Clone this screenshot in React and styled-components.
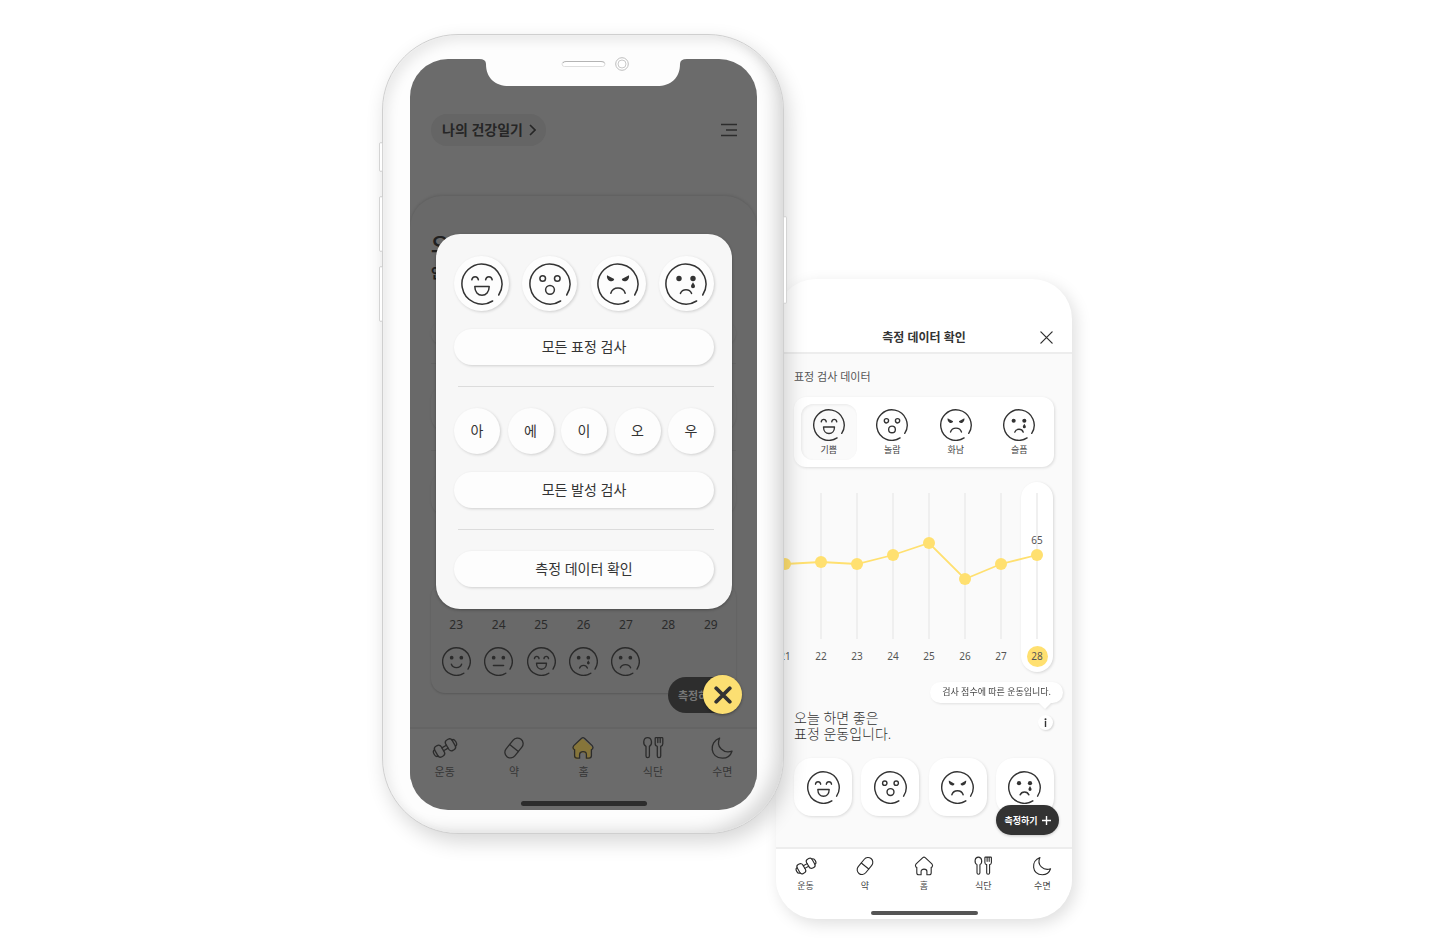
import React from "react";
import styled, { createGlobalStyle, css } from "styled-components";

const Global = createGlobalStyle`
  *, *::before, *::after { box-sizing: border-box; }
  body {
    margin: 0;
    background: #fff;
    color: #333;
    font-family: "Noto Sans", "Noto Sans CJK KR", sans-serif;
  }
  button { font-family: inherit; color: inherit; border: 0; padding: 0; cursor: pointer; }
  a { color: inherit; text-decoration: none; }
  h1, h2, p, ul, ol { margin: 0; padding: 0; list-style: none; }
  svg { display: block; flex: none; }
`;

const Stage = styled.main`
  display: flex;
  justify-content: center;
  align-items: flex-start;
  min-height: 100vh;
  padding: 34px 0 28px 4px;
  overflow: hidden;
`;

/* ---------- device frame ---------- */

const Device = styled.section`
  position: relative;
  z-index: 2;
  flex: 0 0 402px;
  padding: 25px 27px 24px 28px;
  border: 1px solid #cfcfcf;
  border-radius: 76px;
  background: #fdfdfd;
  box-shadow:
    inset -14px -8px 16px -6px rgba(0, 0, 0, 0.14),
    inset 5px 6px 12px rgba(0, 0, 0, 0.08),
    inset 0 0 0 1px #fff,
    4px 8px 20px rgba(0, 0, 0, 0.16);
`;

const SideKey = styled.span`
  position: absolute;
  top: ${(p) => p.$top}px;
  ${(p) => p.$side}: -4px;
  width: 4px;
  height: ${(p) => p.$length}px;
  border: 1px solid #d4d4d4;
  border-radius: 2px;
  background: #fff;
`;

const NotchArt = styled.svg`
  position: absolute;
  top: 0;
  left: 50%;
  margin-left: -105px;
  z-index: 3;
`;

const Screen = styled.div`
  position: relative;
  display: flex;
  flex-direction: column;
  min-height: 751px;
  margin: -1px;
  border-radius: 38px;
  background: #6b6b6b;
  overflow: hidden;
`;

const DiaryHeader = styled.header`
  display: flex;
  justify-content: space-between;
  align-items: center;
  padding: 55px 20px 0 21px;
`;

const DiaryButton = styled.button`
  display: flex;
  align-items: center;
  gap: 6px;
  height: 32px;
  padding: 0 10px 0 11px;
  border-radius: 16px;
  background: #656565;
  font-size: 14px;
  line-height: 20px;
  font-weight: 700;
  color: #262626;
`;

const PlainIconButton = styled.button`
  display: block;
  background: none;
`;

const Sheet = styled.div`
  flex: 1;
  display: flex;
  flex-direction: column;
  margin-top: 50px;
  padding: 36px 21px 34px;
  border-radius: 32px 32px 0 0;
  background: #696969;
  box-shadow: 0 -1px 3px rgba(0, 0, 0, 0.12);
`;

const SheetTitle = styled.h1`
  font-size: 20px;
  line-height: 27px;
  font-weight: 700;
  color: #202020;
`;

const SheetLead = styled.p`
  font-size: 14px;
  line-height: 27px;
  font-weight: 700;
  color: #202020;
`;

const Ghost = styled.div`
  height: ${(p) => p.$h}px;
  margin-top: ${(p) => p.$gap}px;
  border-radius: 16px;
  box-shadow: 0 1px 2px rgba(0, 0, 0, 0.1);
`;

const GhostRule = styled.hr`
  width: 100%;
  height: 1px;
  margin: 18px 0 0;
  border: 0;
  background: #636363;
`;

const WeekCard = styled.div`
  display: flex;
  flex-direction: column;
  justify-content: flex-end;
  gap: 14px;
  height: 110px;
  margin-top: auto;
  padding: 0 4px 17px;
  border-radius: 14px;
  background: #696969;
  box-shadow: 0 1px 2px rgba(0, 0, 0, 0.16);
`;

const WeekRow = styled.ol`
  display: grid;
  grid-template-columns: repeat(7, 1fr);
  justify-items: center;
  font-size: 12px;
  line-height: 16px;
  color: #2b2b2b;
`;

const tabSizes = {
  large: css`
    padding-top: 5px;
    font-size: 11px;
    line-height: 16px;
    gap: 2px;
  `,
  small: css`
    padding-top: 5px;
    font-size: 9px;
    line-height: 12px;
    gap: 2px;
  `,
};

const TabBar = styled.nav`
  display: grid;
  grid-template-columns: repeat(5, 1fr);
  border-top: 2px solid ${(p) => (p.$size === "large" ? "#646464" : "#ededed")};
  background: ${(p) => (p.$size === "large" ? "#6b6b6b" : "#fff")};
  color: ${(p) => (p.$size === "large" ? "#363636" : "#444")};
`;

const Tab = styled.a`
  display: flex;
  flex-direction: column;
  align-items: center;
  ${(p) => tabSizes[p.$size]}
`;

const HomeBar = styled.div`
  width: ${(p) => p.$w}px;
  height: ${(p) => p.$h}px;
  margin: ${(p) => p.$top}px auto ${(p) => p.$bottom}px;
  border-radius: 3px;
  background: ${(p) => p.$color};
`;

const MeasureGroup = styled.div`
  position: absolute;
  right: 15px;
  bottom: 96px;
  display: flex;
  align-items: center;
`;

const DimMeasure = styled.button`
  width: 55px;
  height: 36px;
  margin-right: -20px;
  padding-left: 10px;
  border-radius: 18px 0 0 18px;
  background: #2d2d2d;
  color: #777;
  font-size: 11px;
  font-weight: 700;
  text-align: left;
  white-space: nowrap;
  overflow: hidden;
`;

const CloseFab = styled.button`
  position: relative;
  display: grid;
  place-items: center;
  width: 39px;
  height: 39px;
  border-radius: 50%;
  background: #fcdf72;
  box-shadow: 0 1px 3px rgba(0, 0, 0, 0.4);
`;

/* ---------- test picker dialog ---------- */

const Dialog = styled.div`
  position: absolute;
  top: 175px;
  left: 26px;
  right: 25px;
  padding: 22px 18px;
  border-radius: 24px;
  background: #f7f7f7;
  box-shadow: 0 1px 3px rgba(0, 0, 0, 0.3);
`;

const DialogRow = styled.div`
  display: flex;
  justify-content: space-between;
  margin-bottom: 18px;
`;

const RoundButton = styled.button`
  display: grid;
  place-items: center;
  width: ${(p) => p.$d}px;
  height: ${(p) => p.$d}px;
  border-radius: 50%;
  background: #fdfdfd;
  box-shadow: 1px 1px 3px rgba(0, 0, 0, 0.16);
  font-size: 14px;
  line-height: 20px;
`;

const WideButton = styled.button`
  display: block;
  width: 100%;
  height: 36px;
  border-radius: 18px;
  background: #fdfdfd;
  box-shadow: 1px 1px 3px rgba(0, 0, 0, 0.16);
  font-size: 14px;
  line-height: 20px;
`;

const DialogRule = styled.hr`
  height: 1px;
  margin: 21px 0 21px 4px;
  border: 0;
  background: #dcdcdc;
`;

/* ---------- data card ---------- */

const Panel = styled.section`
  position: relative;
  display: flex;
  flex-direction: column;
  flex: 0 0 296px;
  min-height: 640px;
  margin: 245px 0 0 -8px;
  border-radius: 40px;
  background: #fff;
  box-shadow: 4px 5px 16px rgba(0, 0, 0, 0.13);
  overflow: hidden;
`;

const PanelHeader = styled.header`
  display: grid;
  grid-template-columns: 20px 1fr 20px;
  align-items: center;
  height: 75px;
  padding: 44px 16px 0;
  border-bottom: 2px solid #ededed;
`;

const PanelTitle = styled.h2`
  grid-column: 2;
  font-size: 12px;
  line-height: 16px;
  font-weight: 700;
  text-align: center;
`;

const CloseButton = styled(PlainIconButton)`
  justify-self: end;
  padding: 2px;
`;

const PanelBody = styled.div`
  flex: 1;
  padding: 15px 18px 0;
  background: #fafafa;
`;

const SectionLabel = styled.p`
  font-size: 11px;
  line-height: 16px;
  color: #555;
`;

const FacePicker = styled.div`
  display: grid;
  grid-template-columns: repeat(4, 1fr);
  margin-top: 12px;
  padding: 7px 3px;
  border-radius: 12px;
  background: #fff;
  box-shadow: 1px 1px 3px rgba(0, 0, 0, 0.12);
`;

const FaceOption = styled.button`
  justify-self: center;
  display: flex;
  flex-direction: column;
  align-items: center;
  gap: 2px;
  width: 56px;
  height: 56px;
  padding-top: 5px;
  border-radius: 12px;
  background: ${(p) => (p.$active ? "#fafafa" : "none")};
  box-shadow: ${(p) => (p.$active ? "inset 1px 1px 3px rgba(0,0,0,0.07)" : "none")};
  font-size: 9px;
  line-height: 13px;
  color: #444;

  svg { color: #333; }
`;

const Chart = styled.div`
  position: relative;
  display: flex;
  margin: 15px 0 0 -27px;
`;

const ChartDays = styled.ol`
  display: grid;
  grid-template-columns: repeat(8, 36px);
`;

const ChartDay = styled.li`
  display: flex;
  justify-content: center;
  align-items: flex-end;
  height: 190px;
  margin: 0 2px;
  padding-bottom: 5px;
  font-size: 10px;
  line-height: 21px;
  color: #555;
  border-radius: 16px;
  background: ${(p) => (p.$active ? "#fff" : "none")};
  box-shadow: ${(p) => (p.$active ? "1px 1px 3px rgba(0,0,0,0.14)" : "none")};
`;

const DayBadge = styled.span`
  width: 21px;
  border-radius: 50%;
  text-align: center;
  background: ${(p) => (p.$active ? "#ffe070" : "none")};
`;

const ChartArt = styled.svg`
  position: absolute;
  top: 0;
  left: 0;
`;

const Advice = styled.div`
  position: relative;
  display: flex;
  justify-content: space-between;
  padding: 38px 1px 0 0;
`;

const AdviceTitle = styled.h2`
  font-size: 14px;
  line-height: 16px;
  font-weight: 300;
  color: #333;
`;

const Tooltip = styled.p`
  position: absolute;
  top: 10px;
  right: -9px;
  height: 21px;
  padding: 0 12px;
  border-radius: 11px;
  background: #fff;
  font-size: 9px;
  line-height: 20px;
  white-space: nowrap;
  color: #444;
  filter: drop-shadow(1px 1px 1px rgba(0, 0, 0, 0.1));

  &::after {
    content: "";
    position: absolute;
    top: 20px;
    right: 11px;
    border: 7px solid transparent;
    border-top-color: #fff;
    border-bottom: 0;
  }
`;

const InfoButton = styled.button`
  display: grid;
  place-items: center;
  width: 15px;
  height: 15px;
  margin-top: 5px;
  border-radius: 50%;
  background: #fff;
  box-shadow: 1px 1px 2px rgba(0, 0, 0, 0.14);
`;

const TileRow = styled.div`
  display: flex;
  justify-content: space-between;
  margin-top: 16px;
`;

const Tile = styled.button`
  display: grid;
  place-items: center;
  width: 58px;
  height: 58px;
  border-radius: 18px;
  background: #fff;
  box-shadow: 1px 1px 3px rgba(0, 0, 0, 0.12);
`;

const MeasureButton = styled.button`
  position: absolute;
  right: 13px;
  bottom: 84px;
  display: flex;
  align-items: center;
  justify-content: center;
  gap: 4px;
  width: 63px;
  height: 30px;
  border-radius: 15px;
  background: #333;
  color: #fff;
  font-size: 9px;
  font-weight: 700;
  white-space: nowrap;
  box-shadow: 0 1px 3px rgba(0, 0, 0, 0.2);
`;

/* ---------- drawings ---------- */

const dotEyes = (
  <g fill="currentColor" stroke="none">
    <circle cx="-7" cy="-5.5" r="2.7" />
    <circle cx="7" cy="-5.5" r="2.7" />
  </g>
);

const faceParts = {
  joy: (
    <>
      <path d="M-10.2-4.2C-9.6-8.4-4.2-8.4-3.6-4.2M3.6-4.2C4.2-8.4 9.6-8.4 10.2-4.2" />
      <path d="M-7.2 2.6H7.2C7.2 8 4 11.2 0 11.2S-7.2 8-7.2 2.6Z" />
    </>
  ),
  surprise: (
    <>
      <circle cx="-7.3" cy="-5.5" r="2.8" />
      <circle cx="7.3" cy="-5.5" r="2.8" />
      <circle cx="0" cy="5.8" r="4.4" />
    </>
  ),
  anger: (
    <>
      <path
        fill="currentColor"
        stroke="none"
        d="M-11-8.8L-3.8-4.9C-4.2-2.6-6.4-2.2-8.4-3.1C-10.6-4.1-11.4-6.5-11-8.8ZM11-8.8L3.8-4.9C4.2-2.6 6.4-2.2 8.4-3.1C10.6-4.1 11.4-6.5 11-8.8Z"
      />
      <path d="M-7.2 9.2C-5 2.4 5 2.4 7.2 9.2" />
    </>
  ),
  sorrow: (
    <>
      {dotEyes}
      <path fill="currentColor" stroke="none" d="M7-1.8C7.6-.2 9 .8 9 2.3A2 2 0 0 1 5 2.3C5 .8 6.4-.2 7-1.8Z" />
      <path d="M-5.6 9.4C-3.6 4.4 3.6 4.4 5.6 9.4" />
    </>
  ),
  smile: (
    <>
      {dotEyes}
      <path d="M-7.4 4C-5 10.4 5 10.4 7.4 4" />
    </>
  ),
  calm: (
    <>
      {dotEyes}
      <path d="M-7.4 5.8H7.4" />
    </>
  ),
  sad: (
    <>
      {dotEyes}
      <path d="M-7.4 9.2C-5 3 5 3 7.4 9.2" />
    </>
  ),
};

function Face({ kind, size, line = 1.4 }) {
  return (
    <svg
      width={size}
      height={size}
      viewBox="-21 -21 42 42"
      fill="none"
      stroke="currentColor"
      strokeWidth={line}
      strokeLinecap="round"
      strokeLinejoin="round"
      aria-hidden="true"
    >
      <path d="M16.7 11A20 20 0 1 0 10.6 17" />
      {faceParts[kind]}
    </svg>
  );
}

const tabArt = {
  dumbbell: (
    <g transform="rotate(-30)">
      <rect x="-10" y="-6" width="7.4" height="12" rx="3" />
      <rect x="2.6" y="-6" width="7.4" height="12" rx="3" />
      <path d="M-2.6-1.7H2.6M-2.6 1.7H2.6M-10-3.6C-13.4-3.6-13.4 3.6-10 3.6M10-3.6C13.4-3.6 13.4 3.6 10 3.6" />
    </g>
  ),
  pill: (
    <g transform="rotate(-51)">
      <rect x="-11.2" y="-5.6" width="22.4" height="11.2" rx="5.6" />
      <path d="M0-5.6V5.6" />
    </g>
  ),
  home: (
    <path d="M-1.4-9.8Q0-10.8 1.4-9.8L9.2-2.4Q10.6-.8 9.6.8Q9.200 1.600 8.4 1.600V7.8Q8.4 10.2 6 10.2H3.4V6.400C3.4 2.800-3.4 2.800-3.4 6.400V10.2H-6Q-8.4 10.2-8.4 7.8V1.600Q-9.200 1.600-9.6.8Q-10.6-.8-9.2-2.4Z" />
  ),
  meal: (
    <>
      <path d="M-5.4-10.4C-10-10.4-10.4-3.4-7-1.600V8A1.700 1.700 0 0 0-3.600 8V-1.600C-.4-3.4-.8-10.4-5.4-10.4Z" />
      <path d="M2.200-9.6V-4.2Q2.200-2 4.300-1.600V8A1.700 1.700 0 0 0 7.700 8V-1.600Q9.8-2 9.8-4.2V-9.6Q9.8-10.4 9-10.4H3Q2.200-10.4 2.200-9.6ZM4.800-10.2V-5.4M7.200-10.2V-5.4" />
    </>
  ),
  moon: <path d="M-2.4-9.8C-13.4-6-12 10.2 .4 10.2C5 10.2 8.600 7.600 10 3.2C2 6-6.6-1-2.4-9.8Z" />,
};

function TabIcon({ kind, size, filled }) {
  return (
    <svg
      width={size}
      height={size}
      viewBox="-14 -14 28 28"
      fill="none"
      stroke="#2c2c2c"
      strokeWidth="1.3"
      strokeLinecap="round"
      strokeLinejoin="round"
      aria-hidden="true"
    >
      {filled && (
        <g transform="translate(-0.8 1)" fill="#86753a" stroke="none">
          {tabArt[kind]}
        </g>
      )}
      {tabArt[kind]}
    </svg>
  );
}

function Cross({ size, width, color }) {
  return (
    <svg width={size} height={size} viewBox="0 0 16 16" stroke={color} strokeWidth={width} strokeLinecap="round" aria-hidden="true">
      <path d="M2 2L14 14M14 2L2 14" />
    </svg>
  );
}

function Notch() {
  return (
    <NotchArt width="210" height="54" viewBox="0 0 210 54" aria-hidden="true">
      <path d="M1 22V24Q8 24 8 29C8 43 17 51 31 51H179C193 51 202 43 202 29Q202 24 209 24V22Z" fill="#fdfdfd" />
      <rect x="84" y="26.500" width="43" height="5" rx="2.500" fill="#fff" stroke="#dedede" />
      <path d="M85 28Q86 26.500 88 26.500H123Q125.500 26.500 126.500 28" fill="none" stroke="#b4b4b4" />
      <circle cx="144" cy="29" r="6.300" fill="#fff" stroke="#bdbdbd" />
      <circle cx="144" cy="29" r="4" fill="#fff" stroke="#c9c9c9" />
    </NotchArt>
  );
}

/* ---------- content ---------- */

const tabs = [
  { kind: "dumbbell", label: "운동" },
  { kind: "pill", label: "약" },
  { kind: "home", label: "홈" },
  { kind: "meal", label: "식단" },
  { kind: "moon", label: "수면" },
];

const faces = [
  { kind: "joy", label: "기쁨" },
  { kind: "surprise", label: "놀람" },
  { kind: "anger", label: "화남" },
  { kind: "sorrow", label: "슬픔" },
];

const week = [23, 24, 25, 26, 27, 28, 29];
const weekFaces = ["smile", "calm", "joy", "sorrow", "sad"];
const vowels = ["아", "에", "이", "오", "우"];

const scores = [
  { day: 21, y: 82 },
  { day: 22, y: 80 },
  { day: 23, y: 82 },
  { day: 24, y: 73 },
  { day: 25, y: 61 },
  { day: 26, y: 97 },
  { day: 27, y: 82 },
  { day: 28, y: 73 },
];

const xOf = (i) => i * 36 + 18;

function Tabs({ size, active }) {
  return (
    <TabBar $size={size}>
      {tabs.map((t) => (
        <Tab key={t.kind} href={`#${t.kind}`} $size={size}>
          <TabIcon kind={t.kind} size={size === "large" ? 28 : 24} filled={t.kind === active} />
          {t.label}
        </Tab>
      ))}
    </TabBar>
  );
}

function ScoreChart() {
  const last = scores.length - 1;
  return (
    <Chart>
      <ChartDays>
        {scores.map((s, i) => (
          <ChartDay key={s.day} $active={i === last}>
            <DayBadge $active={i === last}>{s.day}</DayBadge>
          </ChartDay>
        ))}
      </ChartDays>
      <ChartArt width="288" height="160" viewBox="0 0 288 160" role="img" aria-label="표정 검사 점수">
        {scores.slice(1).map((s, i) => (
          <path key={s.day} d={`M${xOf(i + 1)} 11V157`} stroke="#ebebeb" strokeWidth="1.500" />
        ))}
        <polyline
          points={scores.map((s, i) => `${xOf(i)},${s.y}`).join(" ")}
          fill="none"
          stroke="#ffe070"
          strokeWidth="1.800"
        />
        {scores.map((s, i) => (
          <circle key={s.day} cx={xOf(i)} cy={s.y} r="6" fill="#ffe070" />
        ))}
        <text x={xOf(last)} y="62" textAnchor="middle" fontSize="10" fill="#555">
          65
        </text>
      </ChartArt>
    </Chart>
  );
}

function TestDialog() {
  return (
    <Dialog role="dialog" aria-label="검사 선택">
      <DialogRow>
        {faces.map((f) => (
          <RoundButton key={f.kind} $d={55} aria-label={f.label}>
            <Face kind={f.kind} size={42} line={1.5} />
          </RoundButton>
        ))}
      </DialogRow>
      <WideButton>모든 표정 검사</WideButton>
      <DialogRule />
      <DialogRow>
        {vowels.map((v) => (
          <RoundButton key={v} $d={46}>
            {v}
          </RoundButton>
        ))}
      </DialogRow>
      <WideButton>모든 발성 검사</WideButton>
      <DialogRule />
      <WideButton>측정 데이터 확인</WideButton>
    </Dialog>
  );
}

function DiaryPhone() {
  return (
    <Device>
      <SideKey $side="left" $top={107} $length={30} />
      <SideKey $side="left" $top={161} $length={56} />
      <SideKey $side="left" $top={231} $length={56} />
      <SideKey $side="right" $top={181} $length={88} />
      <Notch />
      <Screen>
        <DiaryHeader>
          <DiaryButton>
            나의 건강일기
            <svg width="7" height="12" viewBox="0 0 7 12" fill="none" stroke="#262626" strokeWidth="1.600" aria-hidden="true">
              <path d="M1 1L6 6L1 11" />
            </svg>
          </DiaryButton>
          <PlainIconButton aria-label="메뉴">
            <svg width="16" height="14" viewBox="0 0 16 14" stroke="#2c2c2c" strokeWidth="1.500" aria-hidden="true">
              <path d="M0 1.500H16M5 7H16M0 12.500H16" />
            </svg>
          </PlainIconButton>
        </DiaryHeader>
        <Sheet>
          <SheetTitle>오</SheetTitle>
          <SheetLead>안</SheetLead>
          <Ghost $h={24} $gap={35} />
          <GhostRule />
          <Ghost $h={48} $gap={20} />
          <GhostRule />
          <Ghost $h={45} $gap={20} />
          <WeekCard>
            <WeekRow>
              {week.map((d) => (
                <li key={d}>{d}</li>
              ))}
            </WeekRow>
            <WeekRow>
              {weekFaces.map((kind) => (
                <li key={kind}>
                  <Face kind={kind} size={29} line={2} />
                </li>
              ))}
            </WeekRow>
          </WeekCard>
        </Sheet>
        <Tabs size="large" active="home" />
        <HomeBar $w={126} $h={5} $top={21} $bottom={4} $color="#2c2c2c" />
        <TestDialog />
        <MeasureGroup>
          <DimMeasure>측정하기</DimMeasure>
          <CloseFab aria-label="닫기">
            <Cross size={18} width={3.4} color="#333" />
          </CloseFab>
        </MeasureGroup>
      </Screen>
    </Device>
  );
}

function DataPanel() {
  return (
    <Panel>
      <PanelHeader>
        <PanelTitle>측정 데이터 확인</PanelTitle>
        <CloseButton aria-label="닫기">
          <Cross size={15} width={1.4} color="#333" />
        </CloseButton>
      </PanelHeader>
      <PanelBody>
        <SectionLabel>표정 검사 데이터</SectionLabel>
        <FacePicker>
          {faces.map((f, i) => (
            <FaceOption key={f.kind} $active={i === 0} aria-pressed={i === 0}>
              <Face kind={f.kind} size={32} line={1.8} />
              {f.label}
            </FaceOption>
          ))}
        </FacePicker>
        <ScoreChart />
        <Advice>
          <AdviceTitle>
            오늘 하면 좋은
            <br />
            표정 운동입니다.
          </AdviceTitle>
          <Tooltip>검사 점수에 따른 운동입니다.</Tooltip>
          <InfoButton aria-label="도움말">
            <svg width="3" height="9" viewBox="0 0 3 9" fill="#333" aria-hidden="true">
              <circle cx="1.500" cy="1.200" r="1" />
              <rect x=".8" y="3" width="1.400" height="6" />
            </svg>
          </InfoButton>
        </Advice>
        <TileRow>
          {faces.map((f) => (
            <Tile key={f.kind} aria-label={f.label}>
              <Face kind={f.kind} size={33} line={1.8} />
            </Tile>
          ))}
        </TileRow>
      </PanelBody>
      <Tabs size="small" />
      <HomeBar $w={107} $h={4} $top={19} $bottom={4} $color="#555" />
      <MeasureButton>
        측정하기
        <svg width="9" height="9" viewBox="0 0 9 9" stroke="#fff" strokeWidth="1.400" aria-hidden="true">
          <path d="M4.500 0V9M0 4.500H9" />
        </svg>
      </MeasureButton>
    </Panel>
  );
}

export default function App() {
  return (
    <>
      <Global />
      <Stage>
        <DiaryPhone />
        <DataPanel />
      </Stage>
    </>
  );
}
